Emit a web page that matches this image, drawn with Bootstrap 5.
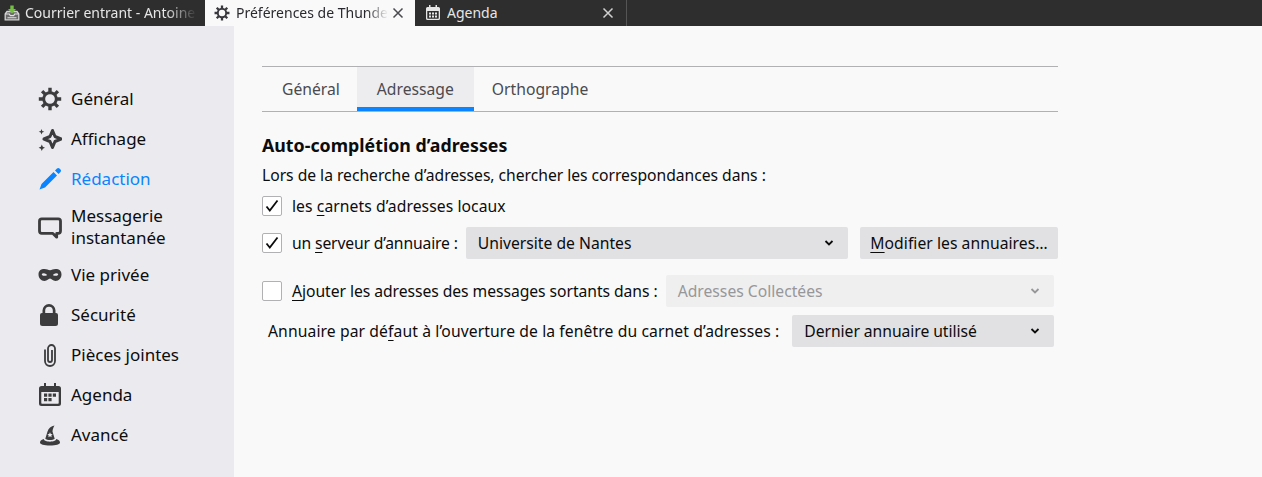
<!DOCTYPE html>
<html lang="fr">
<head>
<meta charset="utf-8">
<title>Préférences de Thunderbird</title>
<link href="https://cdn.jsdelivr.net/npm/bootstrap@5.3.0/dist/css/bootstrap.min.css" rel="stylesheet">
<style>
html,body{height:477px;overflow:hidden}
body{background:#f9f9fa;font-family:"Noto Sans","Open Sans",sans-serif;font-size:15.7px;color:#0c0c0d;line-height:22px}
.tabstrip{height:26px;background:#2e2e2e;color:#e6e6e6;font-size:14px}
.tb{height:26px;position:relative;overflow:hidden;white-space:nowrap}
.tb-1{width:205px;padding-left:4px}
.tb-2{width:210px;padding-left:9px;background:#f9f9fa;color:#2a2a2e}
.tb-3{width:212px;padding-left:10px;border-right:1px solid #555}
.tb svg{flex:none}
.tb-label{overflow:hidden;margin-left:5px;flex:1 1 0}
.tb-2 .tb-label{margin-left:6px}
.tb-3 .tb-label{margin-left:6px}
.tb-1 .tb-label{-webkit-mask-image:linear-gradient(90deg,#000 82%,transparent 100%);mask-image:linear-gradient(90deg,#000 82%,transparent 100%);margin-right:8px}
.tb-2 .tb-label{-webkit-mask-image:linear-gradient(90deg,#000 86%,transparent 100%);mask-image:linear-gradient(90deg,#000 86%,transparent 100%)}
.tb-x{width:12px;margin:0 11px 0 4px}
.tb-3 .tb-x{margin-right:12px}
.shell{height:451px}
.sidebar{width:234px;background:#ebebef;padding:53px 0 0 38px;font-size:17px}
.cat{color:#0c0c0d;text-decoration:none;height:40px;gap:9px;line-height:22px}
.cat-tall{height:56px}
.cat svg{width:24px;height:24px;flex:none;fill:#3c3c3e;color:#3c3c3e}
.cat-on{color:#0a84ff}
.cat-on svg{fill:#0a84ff}
.tab-gear{color:#38383d}
.mainpane{padding:40px 0 0 28px;width:824px}
.subtabs{border-top:1px solid #b1b1b3;border-bottom:1px solid #b1b1b3;height:46px}
.subtab{height:44px;line-height:45px;color:#4a4a4f;text-decoration:none;padding:0 20px}
.subtab-first{padding-right:17px}
.subtab-on{background:#ededf0;border-bottom:4px solid #0a84ff}
.subtab-last{padding-left:18px}
h1.sect{font-size:17.8px;font-weight:700;line-height:24px;margin:21px 0 0}
.intro{height:22px;margin-top:7px;letter-spacing:-.03px}
.cr-1{height:22px;margin-top:9px;letter-spacing:.07px}
.cr-2{margin-top:10px}
.cr-2 .lbl{letter-spacing:-.15px}
.cr-3{margin-top:16px;padding-right:4px}
.cr-4{margin-top:8px;padding:0 4px 0 6px;letter-spacing:.1px}
.ck{width:20px;height:20px;border:1px solid #b1b1b3;border-radius:2px;background:#fff;margin-right:10px;flex:none}
.ck svg{display:block}
.lbl{flex:none;white-space:nowrap}
.cr-3 .lbl{letter-spacing:-.05px}
.dd{height:32px;background:#e1e1e3;border-radius:2px;padding:0 14px 0 12px;color:#0c0c0d;flex:1 1 0;margin-left:8px;letter-spacing:0}
.dd svg{flex:none}
.dd-off{background:#efeff0;color:#97979a}
.cr-4 .dd{margin-left:13px;letter-spacing:-.05px}
.modbtn{height:32px;width:198px;margin-left:12px;background:#e1e1e3;border-radius:2px;padding:0;border:0;color:#0c0c0d;font:inherit;flex:none;letter-spacing:.04px}
.acc{text-decoration:underline;text-underline-offset:3px}
</style>
</head>
<body>
<svg width="0" height="0" class="d-none"><symbol id="gear" viewBox="0 0 24 24"><circle cx="12" cy="12" r="6.300" fill="none" stroke="currentColor" stroke-width="2.900"/><path d="M12 .8v4.400M12 18.800v4.400M.8 12h4.400M18.800 12h4.400M4.100 4.100l3 3M16.900 16.900l3 3M19.900 4.100l-3 3M7.100 16.900l-3 3" fill="none" stroke="currentColor" stroke-width="3.400"/></symbol></svg>
<div class="tabstrip d-flex">
  <div class="tb tb-1 d-flex align-items-center">
    <svg width="16" height="16" viewBox="0 0 16 16"><path d="M1.200 9L3 6.500h10L14.800 9v5.800H1.200z" fill="#6a6a6a" stroke="#d4d4d4" stroke-width="1.300"/><path d="M1.500 9h3.800l1 1.600h3.400l1-1.600h3.800M3.500 12.800h9" fill="none" stroke="#e2e2e2" stroke-width="1.100"/><path d="M6.300 .5h3.400v3.600h2.300L8 8.500 4 4.100h2.300z" fill="#74c043"/></svg>
    <div class="tb-label">Courrier entrant - Antoine Pernot</div>
  </div>
  <div class="tb tb-2 d-flex align-items-center">
    <svg width="16" height="16" class="tab-gear"><use href="#gear"/></svg>
    <div class="tb-label">Préférences de Thunderbird</div>
    <svg class="tb-x" viewBox="0 0 12 12" height="12"><path d="M1.500 1.500l9 9M10.500 1.500l-9 9" stroke="#4a4a4f" stroke-width="1.500"/></svg>
  </div>
  <div class="tb tb-3 d-flex align-items-center">
    <svg width="16" height="16" viewBox="0 0 16 16" fill="#e6e6e6"><path fill-rule="evenodd" d="M4 0h1.500v2h5V0H12v2h1.500A1.500 1.500 0 0 1 15 3.500v10a1.500 1.500 0 0 1-1.500 1.500h-11A1.500 1.500 0 0 1 1 13.500v-10A1.500 1.500 0 0 1 2.500 2H4zM2.300 6v7.300c0 .2.200.4.400.4h10.600c.2 0 .4-.2.400-.4V6z"/><path d="M4 7.500h2v2H4zM7 7.500h2v2H7zM10 7.500h2v2h-2zM4 10.500h2v2H4zM7 10.500h2v2H7zM10 10.500h2v2h-2z"/></svg>
    <div class="tb-label">Agenda</div>
    <svg class="tb-x" viewBox="0 0 12 12" height="12"><path d="M1.500 1.500l9 9M10.500 1.500l-9 9" stroke="#d0d0d0" stroke-width="1.500"/></svg>
  </div>
</div>
<div class="shell d-flex">
  <nav class="sidebar d-flex flex-column">
    <a class="cat d-flex align-items-center" href="#"><svg><use href="#gear"/></svg>Général</a>
    <a class="cat d-flex align-items-center" href="#"><svg viewBox="0 0 24 24"><path d="M14.500 3.500l2.500 6 6 2.500-6 2.500-2.500 6-2.500-6-6-2.500 6-2.500z" fill="none" stroke="#3c3c3e" stroke-width="3" stroke-linejoin="round"/><path d="M3.500 2l.8 2 2 .8-2 .8-.8 2-.8-2-2-.8 2-.8zM3.800 17.500l1 2.200 2.200 1-2.200 1-1 2.200-1-2.200-2.200-1 2.200-1z"/></svg>Affichage</a>
    <a class="cat cat-on d-flex align-items-center" href="#"><svg viewBox="0 0 24 24"><path d="M15.500 5l3.500 3.500L7 20.500l-5.500 2 2-5.500zM17 3.500l2-2a1.800 1.800 0 0 1 2.500 0l1 1a1.800 1.800 0 0 1 0 2.500l-2 2z"/></svg>Rédaction</a>
    <a class="cat cat-tall d-flex align-items-center" href="#"><svg viewBox="0 0 24 24"><path d="M3.800 3.800h16.400a2.300 2.300 0 0 1 2.300 2.300v10a2.300 2.300 0 0 1-2.300 2.300h-1.500v3.800l-3.800-3.800H3.800a2.300 2.300 0 0 1-2.300-2.300v-10a2.300 2.300 0 0 1 2.300-2.300z" fill="none" stroke="#3c3c3e" stroke-width="2.800" stroke-linejoin="round"/></svg><span>Messagerie<br>instantanée</span></a>
    <a class="cat d-flex align-items-center" href="#"><svg viewBox="0 0 24 24"><path fill-rule="evenodd" d="M6.500 6c2.300 0 3.800 1.200 5.500 1.200S15.200 6 17.500 6c3.800 0 6 1.800 6 5.500 0 3.500-2.500 6.500-6 6.500-2.800 0-3.800-2.500-5.500-2.500S9.300 18 6.500 18c-3.500 0-6-3-6-6.500C.5 7.800 2.700 6 6.500 6zm-1 4.200c-1.400 0-2 .8-1.500 1.800.8 1 3 1 4.500.5.700-.3.500-.9-.2-1.300-.8-.6-1.800-1-2.800-1zm13 0c-1 0-2 .4-2.800 1-.7.4-.9 1-.2 1.300 1.500.5 3.700.5 4.500-.5.500-1-.1-1.800-1.500-1.800z"/></svg>Vie privée</a>
    <a class="cat d-flex align-items-center" href="#"><svg viewBox="0 0 24 24"><path fill-rule="evenodd" d="M11 1a6.500 6.500 0 0 1 6.500 6.500V10h.5a2 2 0 0 1 2 2v8.500a2.500 2.500 0 0 1-2.500 2.500h-13A2.500 2.500 0 0 1 2 20.500V12a2 2 0 0 1 2-2h.5V7.500A6.500 6.500 0 0 1 11 1zm0 2.700a3.800 3.800 0 0 0-3.800 3.800V10h7.600V7.500A3.800 3.800 0 0 0 11 3.700z"/></svg>Sécurité</a>
    <a class="cat d-flex align-items-center" href="#"><svg viewBox="0 0 24 24"><path d="M7 6.500V18a5 5 0 0 0 10 0V5.500a3.500 3.500 0 0 0-7 0V17a2 2 0 0 0 4 0V7" fill="none" stroke="#3c3c3e" stroke-width="1.800"/></svg>Pièces jointes</a>
    <a class="cat d-flex align-items-center" href="#"><svg viewBox="0 0 24 24"><path fill-rule="evenodd" d="M6 0h2v3h8V0h2v3h2.500A2.500 2.500 0 0 1 23 5.500v15a2.500 2.500 0 0 1-2.500 2.500h-17A2.500 2.500 0 0 1 1 20.500v-15A2.500 2.500 0 0 1 3.500 3H6zM3.300 9v11c0 .3.200.7.700.7h16c.5 0 .7-.4.700-.7V9z"/><path d="M6 10.500h3.200v3.200H6zM10.400 10.500h3.200v3.200h-3.200zM14.800 10.500H18v3.200h-3.200zM6 15h3.200v3.200H6zM10.400 15h3.200v3.200h-3.200z"/></svg>Agenda</a>
    <a class="cat d-flex align-items-center" href="#"><svg viewBox="0 0 24 24"><path fill-rule="evenodd" d="M16.500 2.500C13 3 10.500 5.500 9.500 8.500l-2.200 7.300c1.700 1.700 7.700 1.700 9.400 0l-2.200-7.300c0-2 1-4.300 2-6zM12 9.300l.8 1.700 1.800.2-1.300 1.200.3 1.800-1.600-.9-1.600.9.300-1.800-1.300-1.200 1.800-.2z"/><path d="M5.700 16C3 16.800 2 18 2 19.500c0 1.800 4 3 10 3s10-1.200 10-3c0-1.500-1-2.700-3.700-3.500-.5 3.500-12.100 3.500-12.600 0z"/></svg>Avancé</a>
  </nav>
  <main class="mainpane">
    <div class="subtabs d-flex">
      <a class="subtab subtab-first" href="#">Général</a>
      <a class="subtab subtab-on" href="#">Adressage</a>
      <a class="subtab subtab-last" href="#">Orthographe</a>
    </div>
    <h1 class="sect">Auto-complétion d’adresses</h1>
    <div class="intro d-flex align-items-center">Lors de la recherche d’adresses, chercher les correspondances dans :</div>
    <div class="d-flex align-items-center cr-1">
      <span class="ck"><svg viewBox="0 0 18 18" width="18" height="18"><path d="M3.500 9.500l3.300 4L14.500 3.500" fill="none" stroke="#0c0c0d" stroke-width="1.800"/></svg></span>
      <span class="lbl">les <span class="acc">c</span>arnets d’adresses locaux</span>
    </div>
    <div class="d-flex align-items-center cr-2">
      <span class="ck"><svg viewBox="0 0 18 18" width="18" height="18"><path d="M3.500 9.500l3.300 4L14.500 3.500" fill="none" stroke="#0c0c0d" stroke-width="1.800"/></svg></span>
      <span class="lbl">un <span class="acc">s</span>erveur d’annuaire :</span>
      <div class="dd d-flex align-items-center justify-content-between"><span>Universite de Nantes</span><svg width="10" height="8" viewBox="0 0 10 8"><path d="M1.500 2L5 5.500 8.500 2" fill="none" stroke="#0c0c0d" stroke-width="1.800"/></svg></div>
      <button type="button" class="modbtn"><span class="acc">M</span>odifier les annuaires…</button>
    </div>
    <div class="d-flex align-items-center cr-3">
      <span class="ck"></span>
      <span class="lbl"><span class="acc">A</span>jouter les adresses des messages sortants dans :</span>
      <div class="dd dd-off d-flex align-items-center justify-content-between"><span>Adresses Collectées</span><svg width="10" height="8" viewBox="0 0 10 8"><path d="M1.500 2L5 5.500 8.500 2" fill="none" stroke="#97979a" stroke-width="1.800"/></svg></div>
    </div>
    <div class="d-flex align-items-center cr-4">
      <span class="lbl">Annuaire par dé<span class="acc">f</span>aut à l’ouverture de la fenêtre du carnet d’adresses :</span>
      <div class="dd d-flex align-items-center justify-content-between"><span>Dernier annuaire utilisé</span><svg width="10" height="8" viewBox="0 0 10 8"><path d="M1.500 2L5 5.500 8.500 2" fill="none" stroke="#0c0c0d" stroke-width="1.800"/></svg></div>
    </div>
  </main>
</div>
</body>
</html>
